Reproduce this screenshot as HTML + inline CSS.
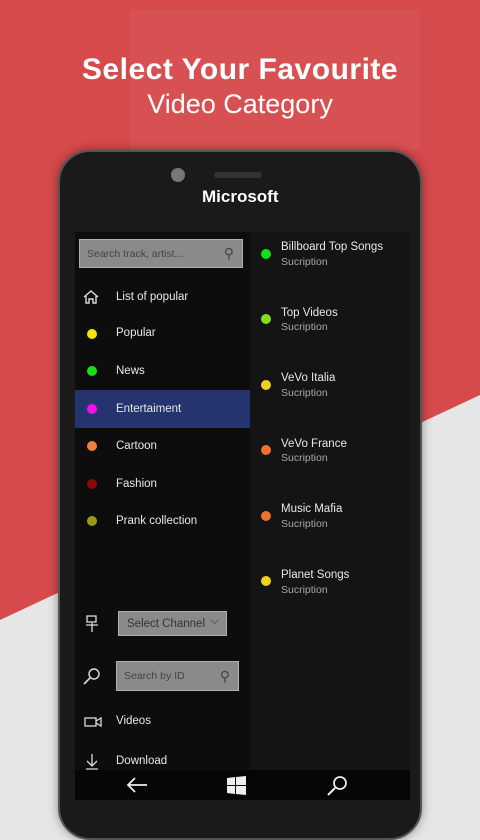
<!DOCTYPE html>
<html><head><meta charset="utf-8"><style>
*{margin:0;padding:0;box-sizing:border-box}
body{width:480px;height:800px;overflow:hidden;position:relative;font-family:"Liberation Sans",sans-serif;background:#e6e6e6}
.bg{position:absolute;inset:0;background:#d64a4c;clip-path:polygon(0 0,480px 0,480px 395px,0 620px)}
.bg2{position:absolute;left:130px;top:10px;width:290px;height:140px;background:rgba(255,255,255,0.04)}
h1{position:absolute;top:53px;width:480px;text-align:center;color:#fff;font-size:30px;font-weight:bold;letter-spacing:0.5px}
h2{position:absolute;top:89px;width:480px;text-align:center;color:#fff;font-size:27px;font-weight:normal}
.phone{position:absolute;left:58px;top:150px;width:364px;height:690px;background:#1a1a1a;border-radius:32px;border:2px solid #555;box-shadow:0 0 10px rgba(0,0,0,.4)}
.cam{position:absolute;left:171px;top:168px;width:14px;height:14px;border-radius:50%;background:#777}
.spk{position:absolute;left:214px;top:172px;width:48px;height:6px;border-radius:3px;background:#333}
.ms{position:absolute;left:202px;top:187px;color:#fff;font-size:17px;font-weight:bold}
.scr{position:absolute;left:75px;top:232px;width:335px;height:538px}
.l{position:absolute;left:0;top:0;width:175px;height:538px;background:#0d0d0d}
.r{position:absolute;left:175px;top:0;width:160px;height:538px;background:#141414}
.nav{position:absolute;left:75px;top:770px;width:335px;height:30px;background:#060606}
.t{position:absolute;color:#e8e8e8;font-size:11.5px}
.s{position:absolute;color:#a8a8a8;font-size:10.5px}
.d{position:absolute;width:10px;height:10px;border-radius:50%}
.box{position:absolute;background:#8a8a8a;border:1px solid #b0b0b0;color:#444;font-size:10.5px}
</style></head><body>
<div class="bg"></div><div class="bg2"></div>
<h1>Select Your Favourite</h1>
<h2>Video Category</h2>
<div class="phone"></div>
<div class="cam"></div><div class="spk"></div>
<div class="ms">Microsoft</div>
<div class="scr"><div class="l"></div><div class="r"></div></div>
<div class="nav"></div>
<div class="box" style="left:79px;top:239px;width:164px;height:29px;padding:8px 7px">Search track, artist...<span style="position:absolute;right:8px;top:5px;font-size:14px">⚲</span></div>
<svg style="position:absolute;left:83px;top:290px" width="16" height="14"><path d="M1 7 L8 1 L15 7 M3 6 V13 H6 V9 H10 V13 H13 V6" fill="none" stroke="#ddd" stroke-width="1.4"/></svg>
<div class="t" style="left:116px;top:291px">List of popular</div>
<div class="d" style="left:87px;top:329px;background:#f4e40a"></div><div class="t" style="left:116px;top:327px">Popular</div>
<div class="d" style="left:87px;top:366px;background:#14e014"></div><div class="t" style="left:116px;top:365px">News</div>
<div style="position:absolute;left:75px;top:390px;width:175px;height:38px;background:#25346e"></div>
<div class="d" style="left:87px;top:404px;background:#f010f0"></div><div class="t" style="left:116px;top:403px">Entertaiment</div>
<div class="d" style="left:87px;top:441px;background:#f08040"></div><div class="t" style="left:116px;top:440px">Cartoon</div>
<div class="d" style="left:87px;top:479px;background:#8a0a0a"></div><div class="t" style="left:116px;top:478px">Fashion</div>
<div class="d" style="left:87px;top:516px;background:#9a9a10"></div><div class="t" style="left:116px;top:515px">Prank collection</div>

<div class="d" style="left:261px;top:249px;background:#14e014"></div><div class="t" style="left:281px;top:241px">Billboard Top Songs</div><div class="s" style="left:281px;top:256px">Sucription</div>
<div class="d" style="left:261px;top:314px;background:#80e020"></div><div class="t" style="left:281px;top:307px">Top Videos</div><div class="s" style="left:281px;top:321px">Sucription</div>
<div class="d" style="left:261px;top:380px;background:#f0d020"></div><div class="t" style="left:281px;top:372px">VeVo Italia</div><div class="s" style="left:281px;top:387px">Sucription</div>
<div class="d" style="left:261px;top:445px;background:#f07030"></div><div class="t" style="left:281px;top:438px">VeVo France</div><div class="s" style="left:281px;top:452px">Sucription</div>
<div class="d" style="left:261px;top:511px;background:#f07030"></div><div class="t" style="left:281px;top:503px">Music Mafia</div><div class="s" style="left:281px;top:518px">Sucription</div>
<div class="d" style="left:261px;top:576px;background:#f0d020"></div><div class="t" style="left:281px;top:569px">Planet Songs</div><div class="s" style="left:281px;top:584px">Sucription</div>

<svg style="position:absolute;left:85px;top:615px" width="14" height="18"><rect x="2" y="1" width="9" height="6" fill="none" stroke="#ddd" stroke-width="1.3"/><path d="M1 10 H13 M7 8 V17" stroke="#ddd" stroke-width="1.3"/></svg>
<div class="box" style="left:118px;top:611px;width:109px;height:25px;padding:6px 8px;font-size:11.5px;color:#333">Select Channel<span style="position:absolute;right:7px;top:3px">⌵</span></div>
<svg style="position:absolute;left:83px;top:667px" width="18" height="18"><circle cx="11" cy="7" r="5" fill="none" stroke="#ddd" stroke-width="1.4"/><path d="M7 11 L1 17" stroke="#ddd" stroke-width="1.6"/></svg>
<div class="box" style="left:116px;top:661px;width:123px;height:30px;padding:8px 7px">Search by ID<span style="position:absolute;right:8px;top:6px;font-size:14px">⚲</span></div>
<svg style="position:absolute;left:84px;top:716px" width="18" height="12"><rect x="1" y="2" width="11" height="8" fill="none" stroke="#ddd" stroke-width="1.3"/><path d="M12 5 L17 2 V10 L12 7" fill="none" stroke="#ddd" stroke-width="1.3"/></svg>
<div class="t" style="left:116px;top:715px">Videos</div>
<svg style="position:absolute;left:86px;top:754px" width="12" height="16"><path d="M6 0 V12 M1 7 L6 12 L11 7 M0 15 H12" fill="none" stroke="#ddd" stroke-width="1.3"/></svg>
<div class="t" style="left:116px;top:755px">Download</div>

<svg style="position:absolute;left:126px;top:776px" width="22" height="18"><path d="M21 9 H2 M9 2 L2 9 L9 16" fill="none" stroke="#eee" stroke-width="1.8"/></svg>
<svg style="position:absolute;left:227px;top:776px" width="19" height="19"><path d="M0 2 L8 1 V9 H0Z M9 1 L19 0 V9 H9Z M0 10 H8 V18 L0 17Z M9 10 H19 V19 L9 18Z" fill="#eee"/></svg>
<svg style="position:absolute;left:326px;top:775px" width="22" height="22"><circle cx="14" cy="8" r="6" fill="none" stroke="#eee" stroke-width="1.7"/><path d="M9 13 L2 20" stroke="#eee" stroke-width="2"/></svg>
</body></html>
